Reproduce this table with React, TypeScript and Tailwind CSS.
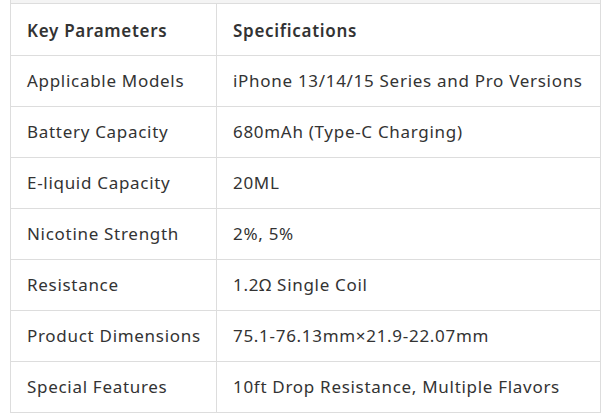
import React from 'react';

const rows: [string, string][] = [
  ['Applicable Models', 'iPhone 13/14/15 Series and Pro Versions'],
  ['Battery Capacity', '680mAh (Type-C Charging)'],
  ['E-liquid Capacity', '20ML'],
  ['Nicotine Strength', '2%, 5%'],
  ['Resistance', '1.2Ω Single Coil'],
  ['Product Dimensions', '75.1-76.13mm×21.9-22.07mm'],
  ['Special Features', '10ft Drop Resistance, Multiple Flavors'],
];

const App: React.FC = () => {
  return (
    <div
      className="w-[609px] h-[418px] bg-white overflow-hidden pl-[10px] text-[#333]"
      style={{ fontFamily: '"Noto Sans", "Open Sans", sans-serif' }}
    >
      <div className="w-[591px]">
        {/* cut-off row above */}
        <div className="h-[4px] border-x border-b border-[#ddd] bg-[#f4f4f4] border-t-0" />
        <table className="w-full table-fixed border-collapse text-[17px] leading-[24px] tracking-[0.7px] whitespace-nowrap">
          <colgroup>
            <col className="w-[206px]" />
            <col />
          </colgroup>
          <thead>
            <tr className="h-[51px]">
              <th className="border border-t-0 border-[#ddd] px-4 pt-[3px] text-left font-semibold">Key Parameters</th>
              <th className="border border-t-0 border-[#ddd] px-4 pt-[3px] text-left font-semibold">Specifications</th>
            </tr>
          </thead>
          <tbody>
            {rows.map(([k, v]) => (
              <tr key={k} className="h-[51px]">
                <td className="border border-[#ddd] px-4">{k}</td>
                <td className="border border-[#ddd] px-4">{v}</td>
              </tr>
            ))}
          </tbody>
        </table>
      </div>
    </div>
  );
};

export default App;
